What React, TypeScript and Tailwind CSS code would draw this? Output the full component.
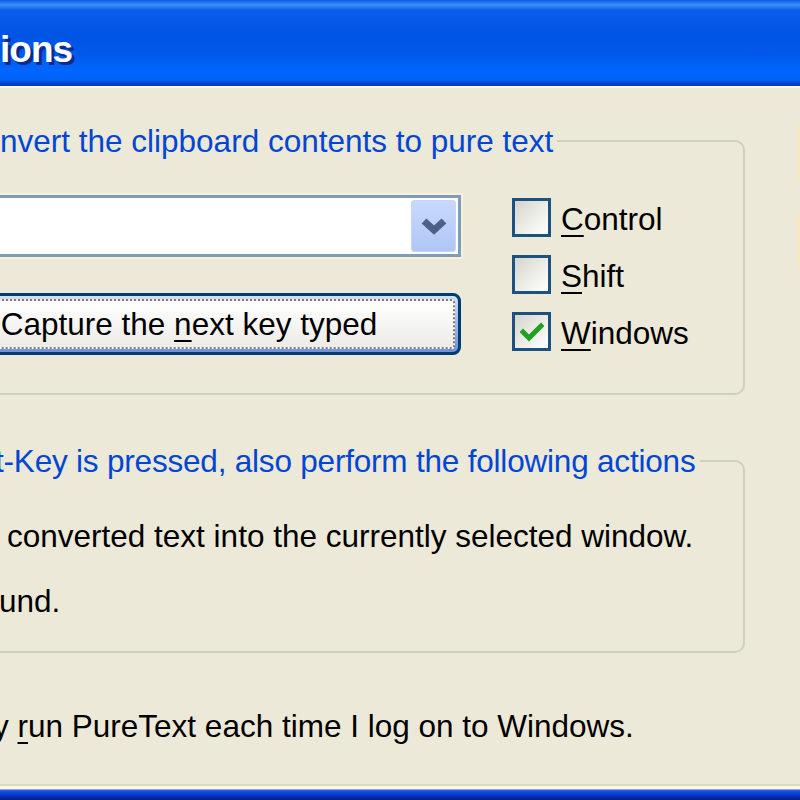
import React from 'react';

// XP "PureText Options" dialog, zoomed in and cropped on the left

function CheckBox({ checked }: { checked?: boolean }) {
  return (
    <span className="flex h-[39px] w-[39px] shrink-0 items-center justify-center border-[3px] border-[#1c5180] bg-gradient-to-br from-[#d4d4cb] via-[#ececE6] to-white">
      {checked && (
        <svg width="24" height="20" viewBox="0 0 24 20">
          <path d="M3 10 L9 16 L21 4" stroke="#21a121" strokeWidth="5" fill="none" strokeLinecap="square" />
        </svg>
      )}
    </span>
  );
}

function Key({ children }: { children: React.ReactNode }) {
  return <span className="underline decoration-2 underline-offset-[5px]">{children}</span>;
}

export default function App() {
  return (
    <div className="flex h-[800px] w-[800px] flex-col overflow-hidden bg-[#ece9d8] font-['Liberation_Sans',Arial,sans-serif] text-black">
      {/* title bar */}
      <div className="flex h-[86px] shrink-0 items-start bg-[linear-gradient(180deg,#0a5ae6_0px,#3e91f8_5px,#0c5ded_10px,#0054e3_35px,#0058ea_55px,#0066ff_70px,#0063fa_80px,#0044d0_83px,#003ab5_86px)] pt-[31px]">
        <span className="text-[37px] font-bold leading-[38px] tracking-[-1px] text-white [text-shadow:3px_3px_0_#0a2a8c]">ions</span>
      </div>
      <div className="h-[2px] shrink-0 bg-[#fdf8e6]" />

      <div className="flex flex-1">
        <div className="flex w-[797px] shrink-0 flex-col">
          {/* group 1 */}
          <fieldset className="mt-[35px] -ml-[20px] w-[765px] rounded-[10px] border-2 border-[#d0d0bf] pt-[36px] pb-[38px]">
            <legend className="ml-[14px] px-[4px] text-[31.5px] leading-[36px] text-[#0046d5]">
              nvert the clipboard contents to pure text
            </legend>
            <div className="flex">
              <div className="-ml-[73px] flex w-[552px] shrink-0 flex-col gap-[36px]">
                <div className="flex h-[62px] items-center justify-end border-[3px] border-[#7f9db9] bg-white pr-[2px] shadow-[0_0_0_2px_#f7f1da]">
                  <div className="flex h-[52px] w-[45px] items-center justify-center rounded-[3px] border border-[#c6d6fb] bg-gradient-to-b from-[#c8d9fc] to-[#afc6f6]">
                    <svg width="30" height="20" viewBox="0 0 30 20">
                      <path d="M5 5 L15 14 L25 5" stroke="#4d6185" strokeWidth="7" fill="none" />
                    </svg>
                  </div>
                </div>
                <button className="h-[62px] w-[552px] rounded-[8px] border-[3px] border-[#003c74] bg-gradient-to-b from-[#cee0fb] to-[#6d8fe0] p-[3px]">
                  <div className="flex h-full items-center justify-center rounded-[3px] border-2 border-dotted border-[#8b7866] bg-gradient-to-b from-white to-[#ecebe6] text-[31.5px] leading-[36px]">
                    <span className="ml-[8px]">Capture the <Key>n</Key>ext key typed</span>
                  </div>
                </button>
              </div>
              <div className="mt-[3px] ml-[51px] flex flex-col gap-[18px]">
                <label className="flex h-[39px] items-center gap-[10px]">
                  <CheckBox />
                  <span className="mt-[3px] text-[31.5px] leading-[36px]"><Key>C</Key>ontrol</span>
                </label>
                <label className="flex h-[39px] items-center gap-[10px]">
                  <CheckBox />
                  <span className="mt-[3px] text-[31.5px] leading-[36px]"><Key>S</Key>hift</span>
                </label>
                <label className="flex h-[39px] items-center gap-[10px]">
                  <CheckBox checked />
                  <span className="mt-[3px] text-[31.5px] leading-[36px]"><Key>W</Key>indows</span>
                </label>
              </div>
            </div>
          </fieldset>

          {/* group 2 */}
          <fieldset className="mt-[48px] -ml-[20px] w-[765px] rounded-[10px] border-2 border-[#d0d0bf] pt-[39px] pb-[32px]">
            <legend className="ml-[13px] pr-[5px] text-[31.5px] leading-[36px] tracking-[-0.2px] text-[#0046d5]">
              t-Key is pressed, also perform the following actions
            </legend>
            <div className="flex flex-col gap-[29px] text-[31.5px] leading-[36px]">
              <span className="ml-[25px]">converted text into the currently selected window.</span>
              <span className="ml-[17px]">und.</span>
            </div>
          </fieldset>

          <div className="mt-[55px] -ml-[7px] text-[31.5px] leading-[36px]">
            y <Key>r</Key>un PureText each time I log on to Windows.
          </div>
        </div>

        {/* edges of the dialog buttons on the right */}
        <div className="flex flex-col gap-[31px] pt-[36px]">
          <div className="h-[57px] w-[20px] rounded-l-[4px] border-l-[3px] border-[#f6e8bf] bg-[#f1f0ea]" />
          <div className="h-[57px] w-[20px] rounded-l-[4px] border-l-[3px] border-[#f6e8bf] bg-[#f1f0ea]" />
        </div>
      </div>

      {/* bottom frame */}
      <div className="h-[16px] shrink-0 bg-[linear-gradient(180deg,#dcd8c6_0px,#dcd8c6_2px,#fdf6df_2px,#fdf6df_5px,#1f5ef0_6px,#0a3fd0_10px,#001c8a_16px)]" />
    </div>
  );
}
